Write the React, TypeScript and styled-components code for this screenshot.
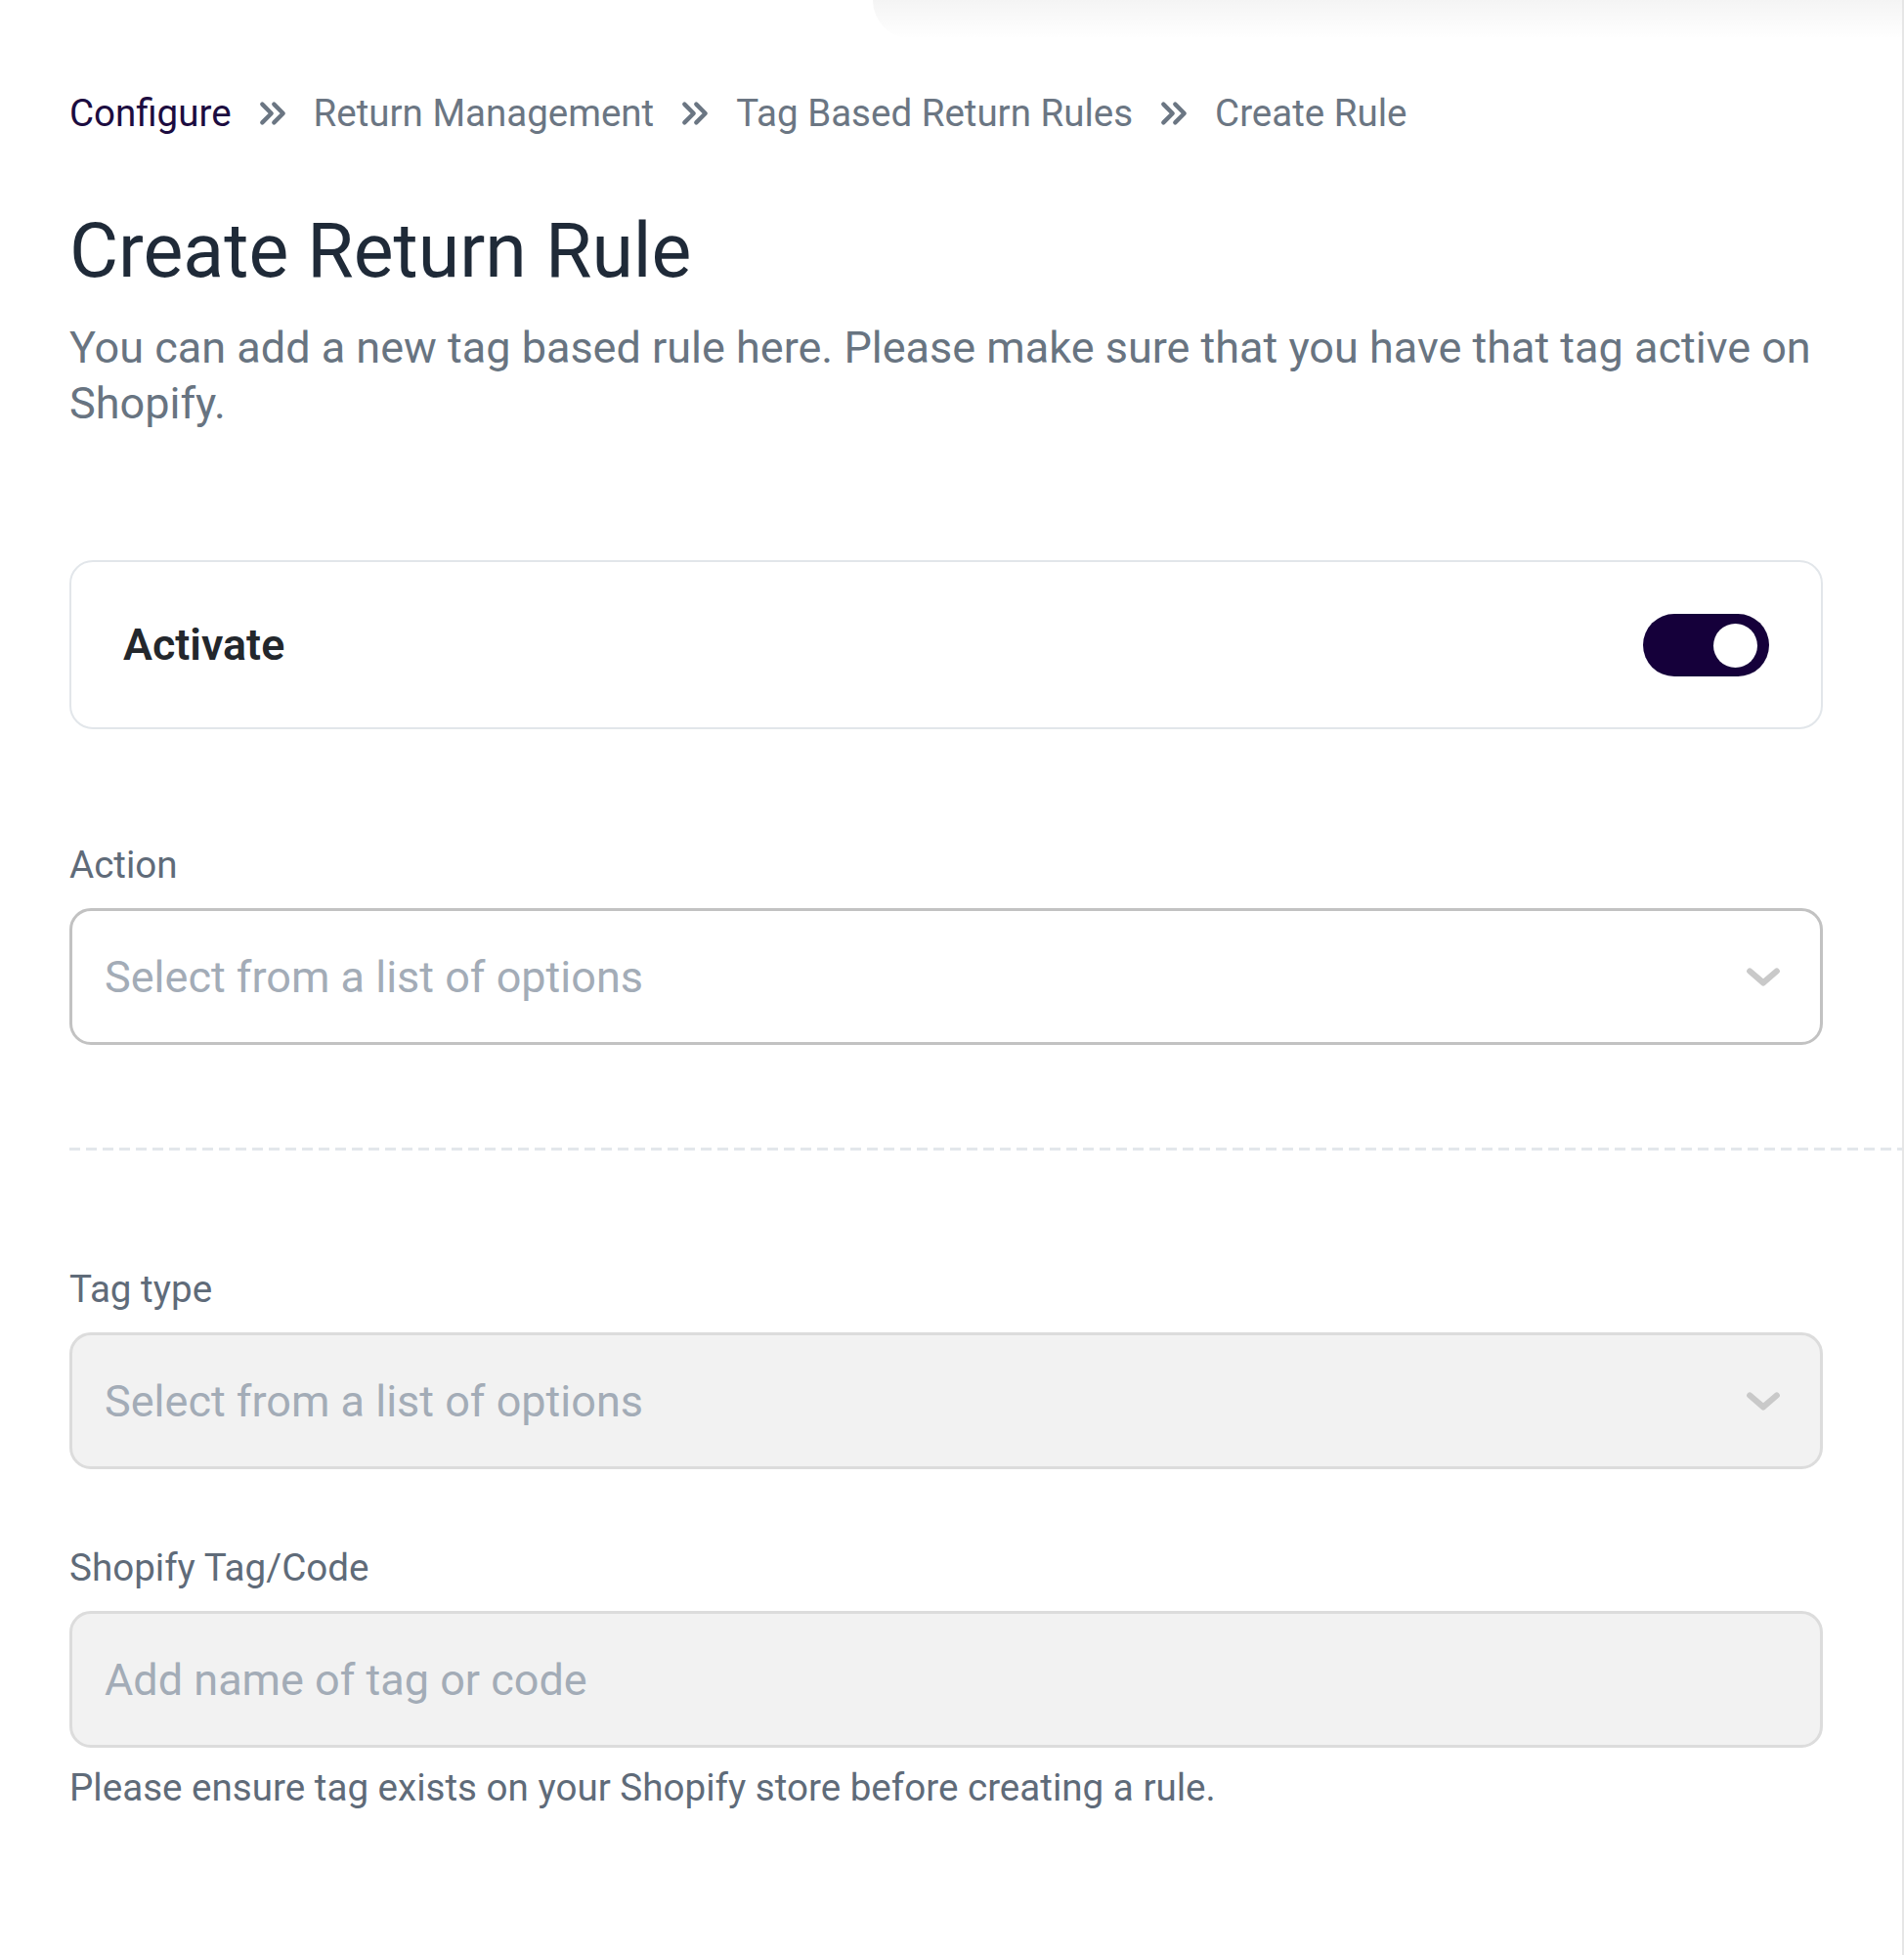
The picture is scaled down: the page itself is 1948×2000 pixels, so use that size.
import * as React from 'react'
import styled, { createGlobalStyle } from 'styled-components'

const GlobalStyle = createGlobalStyle`
  html, body {
    margin: 0;
    padding: 0;
    background: #fff;
    font-family: Roboto, "Liberation Sans", Arial, sans-serif;
  }
  * {
    box-sizing: border-box;
  }
`

const Page = styled.div`
  position: relative;
  width: 1948px;
  min-height: 2000px;
  background: #fff;
  border-right: 2px solid #e6e6e6;
  overflow: hidden;
`

const TopShadow = styled.div`
  position: absolute;
  top: 0;
  left: 893px;
  right: 0;
  height: 40px;
  background: linear-gradient(to bottom, rgba(0, 0, 0, 0.045), rgba(0, 0, 0, 0));
  border-bottom-left-radius: 40px;
`

const Content = styled.div`
  padding: 90px 81px 0 71px;
  display: flex;
  flex-direction: column;
`

const Breadcrumbs = styled.nav`
  display: flex;
  align-items: center;
  gap: 26px;
  font-size: 38.5px;
  line-height: 52px;
  color: #6b7683;
`

const Crumb = styled.span<{ $active?: boolean }>`
  color: ${p => (p.$active ? '#1c0c40' : '#6b7683')};
`

const Chevrons = styled.svg`
  width: 32px;
  height: 32px;
  flex: none;
`

const Title = styled.h1`
  margin: 68px 0 0;
  font-size: 77px;
  font-weight: 400;
  line-height: 94px;
  color: #1f2a38;
`

const Description = styled.p`
  margin: 23px 0 0;
  font-size: 45px;
  line-height: 57px;
  color: #687481;
`

const Card = styled.div`
  margin-top: 132px;
  height: 173px;
  border: 2px solid #e2e6ea;
  border-radius: 24px;
  display: flex;
  align-items: center;
  justify-content: space-between;
  padding: 0 53px 0 53px;
`

const CardLabel = styled.span`
  font-size: 44.8px;
  font-weight: 600;
  color: #23272c;
`

const Toggle = styled.div<{ $on: boolean }>`
  position: relative;
  width: 129px;
  height: 64px;
  border-radius: 32px;
  background: ${p => (p.$on ? '#15003a' : '#cfd4da')};
  cursor: pointer;

  &::after {
    content: '';
    position: absolute;
    top: 10px;
    left: ${p => (p.$on ? '72px' : '10px')};
    width: 45px;
    height: 45px;
    border-radius: 50%;
    background: #fff;
  }
`

const Field = styled.div<{ $top: number }>`
  margin-top: ${p => p.$top}px;
  display: flex;
  flex-direction: column;
`

const Label = styled.label`
  font-size: 38.6px;
  line-height: 48px;
  color: #5f6b79;
  margin-bottom: 20px;
`

const Control = styled.div<{ $disabled?: boolean }>`
  height: 140px;
  border: 3px solid ${p => (p.$disabled ? '#dcdcdc' : '#c2c2c2')};
  background: ${p => (p.$disabled ? '#f2f2f2' : '#fff')};
  border-radius: 22px;
  display: flex;
  align-items: center;
  justify-content: space-between;
  padding: 0 36px 0 33px;
`

const Placeholder = styled.span`
  font-size: 45px;
  color: #a3acb7;
`

const Caret = styled.svg`
  width: 44px;
  height: 44px;
  flex: none;
`

const Divider = styled.div`
  margin: 105px -90px 0 0;
  height: 3px;
  background: repeating-linear-gradient(to right, #e3e7eb 0 11px, transparent 11px 17px);
`

const Hint = styled.p`
  margin: 17px 0 0;
  font-size: 38.6px;
  line-height: 48px;
  color: #5f6b79;
`

const DoubleChevron = () => (
  <Chevrons viewBox="0 0 24 24" fill="none" stroke="#6b7683" strokeWidth="3.3" strokeLinecap="round" strokeLinejoin="round">
    <path d="M4 5l7 7-7 7" />
    <path d="M13 5l7 7-7 7" />
  </Chevrons>
)

const ChevronDown = () => (
  <Caret viewBox="0 0 24 24" fill="none" stroke="#c9c9c9" strokeWidth="3.4" strokeLinecap="round" strokeLinejoin="round">
    <path d="M4.5 9l7.5 6.5 7.5-6.5" />
  </Caret>
)

const crumbs = ['Configure', 'Return Management', 'Tag Based Return Rules', 'Create Rule']

export default function App() {
  const [active, setActive] = React.useState(true)

  return (
    <Page>
      <GlobalStyle />
      <TopShadow />
      <Content>
        <Breadcrumbs>
          {crumbs.map((c, i) => (
            <React.Fragment key={c}>
              {i > 0 && <DoubleChevron />}
              <Crumb $active={i === 0}>{c}</Crumb>
            </React.Fragment>
          ))}
        </Breadcrumbs>
        <Title>Create Return Rule</Title>
        <Description>
          You can add a new tag based rule here. Please make sure that you have that tag active on Shopify.
        </Description>

        <Card>
          <CardLabel>Activate</CardLabel>
          <Toggle $on={active} onClick={() => setActive(!active)} />
        </Card>

        <Field $top={115}>
          <Label>Action</Label>
          <Control>
            <Placeholder>Select from a list of options</Placeholder>
            <ChevronDown />
          </Control>
        </Field>

        <Divider />

        <Field $top={118}>
          <Label>Tag type</Label>
          <Control $disabled>
            <Placeholder>Select from a list of options</Placeholder>
            <ChevronDown />
          </Control>
        </Field>

        <Field $top={77}>
          <Label>Shopify Tag/Code</Label>
          <Control $disabled>
            <Placeholder>Add name of tag or code</Placeholder>
          </Control>
          <Hint>Please ensure tag exists on your Shopify store before creating a rule.</Hint>
        </Field>
      </Content>
    </Page>
  )
}
